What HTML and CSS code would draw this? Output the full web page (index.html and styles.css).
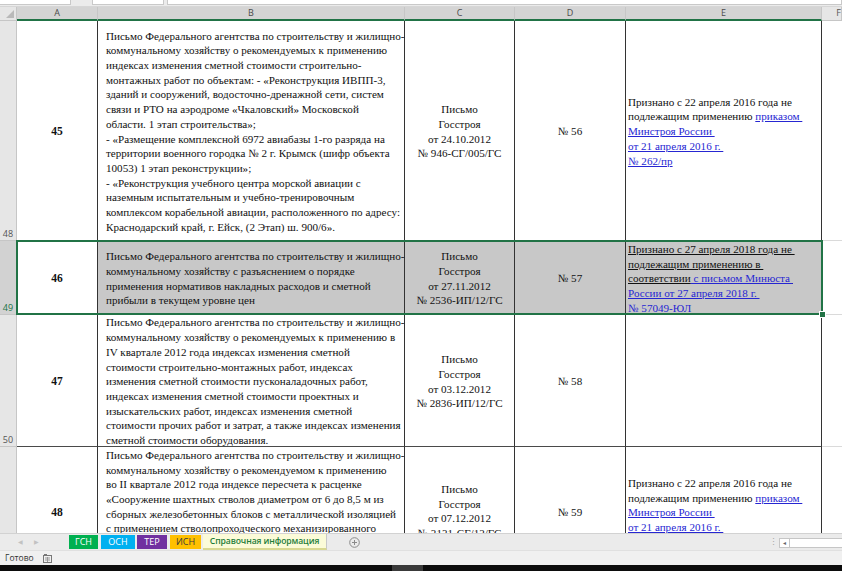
FILE: index.html
```html
<!DOCTYPE html>
<html lang="ru">
<head>
<meta charset="utf-8">
<title>Справочная информация</title>
<link rel="stylesheet" href="styles.css">
</head>
<body>
<div class="app">
  <div class="topstrip">
    <div class="box b1"></div>
    <div class="box b2"></div>
    <div class="box b3"></div>
  </div>

  <div class="sheet">
    <div class="corner"><span class="tri"></span></div>
    <div class="colhead sel">A</div>
    <div class="colhead sel">B</div>
    <div class="colhead sel">C</div>
    <div class="colhead sel">D</div>
    <div class="colhead sel">E</div>
    <div class="colhead f">F</div>

    <!-- row 48 -->
    <div class="rowhead">48</div>
    <div class="cell num">45</div>
    <div class="cell txt">
      <span class="line">Письмо Федерального агентства по строительству и жилищно-</span>
      <span class="line">коммунальному хозяйству о рекомендуемых к применению</span>
      <span class="line">индексах изменения сметной стоимости строительно-</span>
      <span class="line">монтажных работ по объектам: - «Реконструкция ИВПП-3,</span>
      <span class="line">зданий и сооружений, водосточно-дренажной сети, систем</span>
      <span class="line">связи и РТО на аэродроме «Чкаловский» Московской</span>
      <span class="line">области. 1 этап строительства»;</span>
      <span class="line">- «Размещение комплексной 6972 авиабазы 1-го разряда на</span>
      <span class="line">территории военного городка № 2 г. Крымск (шифр объекта</span>
      <span class="line">10053) 1 этап реконструкции»;</span>
      <span class="line">- «Реконструкция учебного центра морской авиации с</span>
      <span class="line">наземным испытательным и учебно-тренировочным</span>
      <span class="line">комплексом корабельной авиации, расположенного по адресу:</span>
      <span class="line">Краснодарский край, г. Ейск, (2 Этап) ш. 900/6».</span>
    </div>
    <div class="cell ctr">
      <span class="line">Письмо</span>
      <span class="line">Госстроя</span>
      <span class="line">от 24.10.2012</span>
      <span class="line">№ 946-СГ/005/ГС</span>
    </div>
    <div class="cell ctr"><span class="line">№ 56</span></div>
    <div class="cell note">
      <span class="line">Признано с 22 апреля 2016 года не</span>
      <span class="line">подлежащим применению <a class="link" href="#">приказом&nbsp;</a></span>
      <span class="line"><a class="link" href="#">Минстроя России&nbsp;</a></span>
      <span class="line"><a class="link" href="#">от 21 апреля 2016 г.&nbsp;</a></span>
      <span class="line"><a class="link" href="#">№ 262/пр</a></span>
    </div>
    <div class="fcell"></div>

    <!-- row 49 -->
    <div class="rowhead sel">49</div>
    <div class="cell num">46</div>
    <div class="cell txt sel">
      <span class="line">Письмо Федерального агентства по строительству и жилищно-</span>
      <span class="line">коммунальному хозяйству с разъяснением о порядке</span>
      <span class="line">применения нормативов накладных расходов и сметной</span>
      <span class="line">прибыли в текущем уровне цен</span>
    </div>
    <div class="cell ctr sel">
      <span class="line">Письмо</span>
      <span class="line">Госстроя</span>
      <span class="line">от 27.11.2012</span>
      <span class="line">№ 2536-ИП/12/ГС</span>
    </div>
    <div class="cell ctr sel"><span class="line">№ 57</span></div>
    <div class="cell note sel">
      <span class="line u">Признано с 27 апреля 2018 года не&nbsp;</span>
      <span class="line u">подлежащим применению в&nbsp;</span>
      <span class="line u">соответствии<a class="link" href="#"> с письмом Минюста&nbsp;</a></span>
      <span class="line"><a class="link" href="#">России от 27 апреля 2018 г.&nbsp;</a></span>
      <span class="line"><a class="link" href="#">№ 57049-ЮЛ</a></span>
    </div>
    <div class="fcell"></div>

    <!-- row 50 -->
    <div class="rowhead">50</div>
    <div class="cell num">47</div>
    <div class="cell txt">
      <span class="line">Письмо Федерального агентства по строительству и жилищно-</span>
      <span class="line">коммунальному хозяйству о рекомендуемых к применению в</span>
      <span class="line">IV квартале 2012 года индексах изменения сметной</span>
      <span class="line">стоимости строительно-монтажных работ, индексах</span>
      <span class="line">изменения сметной стоимости пусконаладочных работ,</span>
      <span class="line">индексах изменения сметной стоимости проектных и</span>
      <span class="line">изыскательских работ, индексах изменения сметной</span>
      <span class="line">стоимости прочих работ и затрат, а также индексах изменения</span>
      <span class="line">сметной стоимости оборудования.</span>
    </div>
    <div class="cell ctr">
      <span class="line">Письмо</span>
      <span class="line">Госстроя</span>
      <span class="line">от 03.12.2012</span>
      <span class="line">№ 2836-ИП/12/ГС</span>
    </div>
    <div class="cell ctr"><span class="line">№ 58</span></div>
    <div class="cell note"></div>
    <div class="fcell"></div>

    <!-- row 51 (cut by the sheet tab bar) -->
    <div class="rowhead last"></div>
    <div class="cell num last p-num">48</div>
    <div class="cell txt last p-txt">
      <span class="line">Письмо Федерального агентства по строительству и жилищно-</span>
      <span class="line">коммунальному хозяйству о рекомендуемом к применению</span>
      <span class="line">во II квартале 2012 года индексе пересчета к расценке</span>
      <span class="line">«Сооружение шахтных стволов диаметром от 6 до 8,5 м из</span>
      <span class="line">сборных железобетонных блоков с металлической изоляцией</span>
      <span class="line">с применением стволопроходческого механизированного</span>
    </div>
    <div class="cell ctr last p-ctr">
      <span class="line">Письмо</span>
      <span class="line">Госстроя</span>
      <span class="line">от 07.12.2012</span>
      <span class="line">№ 3131-СГ/12/ГС</span>
    </div>
    <div class="cell ctr last p-num">
      <span class="line">№ 59</span>
    </div>
    <div class="cell note last p-note">
      <span class="line">Признано с 22 апреля 2016 года не</span>
      <span class="line">подлежащим применению <a class="link" href="#">приказом&nbsp;</a></span>
      <span class="line"><a class="link" href="#">Минстроя России&nbsp;</a></span>
      <span class="line"><a class="link" href="#">от 21 апреля 2016 г.&nbsp;</a></span>
    </div>
    <div class="fcell last"></div>

    <div class="selection"><span class="handle"></span></div>
  </div>

  <div class="tabbar">
    <div class="nav"><span class="arrow">&#9664;</span><span class="arrow">&#9654;</span></div>
    <div class="tabs">
      <div class="tab t-gsn">ГСН</div>
      <div class="tab t-osn">ОСН</div>
      <div class="tab t-ter">ТЕР</div>
      <div class="tab t-isn">ИСН</div>
      <div class="tab active">Справочная информация</div>
    </div>
    <div class="addsheet">
      <svg width="11" height="11" viewBox="0 0 11 11"><circle cx="5.5" cy="5.5" r="4.8" fill="none" stroke="#8a8a8a" stroke-width="1"/><path d="M5.5 3v5M3 5.5h5" stroke="#8a8a8a" stroke-width="1"/></svg>
    </div>
    <div class="spacer"></div>
    <div class="splitter">&#8942;</div>
    <div class="hscroll"><span class="harrow">&#9666;</span></div>
  </div>

  <div class="status">
    <span class="ready">Готово</span>
    <span class="macro">
      <svg width="9" height="9" viewBox="0 0 9 9"><rect x="0.5" y="1.5" width="8" height="7" fill="none" stroke="#777"/><rect x="1" y="0" width="3" height="2" fill="#777"/><path d="M2 4h5M2 6h5M4.5 3v5" stroke="#999"/></svg>
    </span>
  </div>
  <div class="taskbar"><span class="tb-gap"></span></div>
</div>
</body>
</html>
```

FILE: styles.css
```css
* { box-sizing: border-box; }
html, body { margin: 0; padding: 0; }
body {
  width: 842px;
  height: 571px;
  overflow: hidden;
  background: #fff;
  font-family: "Liberation Serif", "Times New Roman", serif;
}
.app {
  display: flex;
  flex-direction: column;
  width: 842px;
  height: 571px;
}

/* formula bar remnant */
.topstrip {
  height: 7px;
  flex: none;
  display: flex;
  background: #ebebeb;
  border-bottom: 1px solid #d6d6d6;
}
.topstrip .box {
  height: 5px;
  background: #fff;
  border-bottom: 1px solid #c9c9c9;
  border-right: 1px solid #c9c9c9;
}
.b1 { width: 71px; }
.b2 { width: 72px; margin-left: 21px; border-left: 1px solid #c9c9c9; }
.b3 { flex: 1; margin-left: 3px; border-left: 1px solid #c9c9c9; }

/* sheet grid */
.sheet {
  position: relative;
  flex: none;
  height: 526px;
  overflow: hidden;
  display: grid;
  grid-template-columns: 17px 81px 307px 110px 111px 196px 1fr;
  grid-template-rows: 14px 220px 74px 132px 86px;
  background: #fff;
}
.corner {
  background: #e6e6e6;
  border-right: 1px solid #c6c6c6;
  border-bottom: 1px solid #c6c6c6;
  display: flex;
  align-items: flex-end;
  justify-content: flex-end;
  padding: 0 2px 2px 0;
}
.tri {
  width: 0;
  height: 0;
  border-left: 8px solid transparent;
  border-bottom: 8px solid #b9b9b9;
}
.colhead {
  background: #e6e6e6;
  border-right: 1px solid #c6c6c6;
  border-bottom: 1px solid #c6c6c6;
  font-family: "Open Sans", "Liberation Sans", sans-serif;
  font-size: 9px;
  color: #555;
  text-align: center;
  line-height: 12px;
}
.colhead.sel {
  background: #d4d4d4;
  border-bottom: 2px solid #217346;
  color: #4b4b4b;
}
.colhead.f {
  text-align: right;
  overflow: hidden;
}
.rowhead {
  background: #e6e6e6;
  border-right: 1px solid #c6c6c6;
  border-bottom: 1px solid #c6c6c6;
  display: flex;
  align-items: flex-end;
  justify-content: center;
  font-family: "Open Sans", "Liberation Sans", sans-serif;
  font-size: 9px;
  line-height: 11px;
  color: #555;
  padding-bottom: 1px;
}
.rowhead.sel {
  background: #d2d2d2;
  color: #217346;
}

.cell {
  border-right: 1px solid #333;
  border-bottom: 1px solid #4a4a4a;
  display: flex;
  flex-direction: column;
  justify-content: center;
  font-size: 11.1px;
  line-height: 14.67px;
  color: #111;
  min-width: 0;
  padding-top: 2px;
}
.cell.num {
  align-items: center;
  font-weight: bold;
  font-size: 11.5px;
}
.cell.txt {
  align-items: flex-start;
  padding-left: 8px;
}
.cell.ctr {
  align-items: center;
  text-align: center;
}
.cell.note {
  align-items: flex-start;
  padding-left: 2px;
}
.cell.sel { background: #c8c8c8; }
.fcell {
  border-bottom: 1px solid #dadada;
}

/* last visible row, cut by the tab bar */
.last {
  border-bottom: none;
  overflow: hidden;
}
.cell.last { justify-content: flex-start; }
.cell.p-txt { padding-top: 1px; }
.cell.p-ctr { padding-top: 35px; }
.cell.p-num { padding-top: 58px; }
.cell.p-note { padding-top: 29px; }

.line {
  display: block;
  white-space: nowrap;
}
.u { text-decoration: underline; }
.link {
  color: #2626d2;
  text-decoration: underline;
}

.selection {
  position: absolute;
  left: 16px;
  top: 233px;
  width: 807px;
  height: 75px;
  border: 2px solid #217346;
  pointer-events: none;
}
.handle {
  position: absolute;
  right: -5px;
  bottom: -5px;
  width: 7px;
  height: 7px;
  background: #217346;
  border: 1px solid #fff;
}

/* sheet tabs */
.tabbar {
  flex: none;
  height: 17px;
  display: flex;
  align-items: flex-start;
  background: #ebebeb;
  border-top: 1px solid #d2d2d2;
  font-family: "Open Sans", "Liberation Sans", sans-serif;
}
.nav {
  width: 69px;
  display: flex;
  gap: 11px;
  padding: 3px 0 0 18px;
  font-size: 6px;
  color: #c2c2c2;
  line-height: 10px;
}
.tabs {
  display: flex;
  gap: 2px;
  height: 16px;
}
.tab {
  height: 14px;
  margin-top: 1px;
  display: flex;
  align-items: center;
  justify-content: center;
  font-size: 9px;
  color: #fff;
  line-height: 12px;
  white-space: nowrap;
}
.t-gsn { width: 29px; background: #00b050; margin-right: 1px; }
.t-osn { width: 34px; background: #00b0f0; }
.t-ter { width: 30px; background: #7030a0; margin-right: 1px; }
.t-isn { width: 31px; background: #ffc000; color: #3a3a3a; }
.tab.active {
  width: 124px;
  height: 16px;
  margin-top: 0;
  background: #fbfbd8;
  color: #1e7d3a;
  font-weight: 600;
  font-size: 8.6px;
  letter-spacing: -0.1px;
  border-bottom: 2px solid #d8d890;
  border-right: 1px solid #c8c8c8;
}
.addsheet {
  width: 11px;
  height: 11px;
  margin: 3px 0 0 22px;
  display: flex;
}
.spacer { flex: 1; }
.splitter {
  width: 11px;
  font-size: 9px;
  line-height: 16px;
  color: #a8a8a8;
  text-align: center;
}
.hscroll {
  width: 63px;
  height: 10px;
  margin-top: 4px;
  background: #fff;
  border: 1px solid #c6c6c6;
  border-right: none;
  display: flex;
  align-items: center;
}
.harrow {
  width: 10px;
  height: 8px;
  border-right: 1px solid #c6c6c6;
  font-size: 6px;
  line-height: 8px;
  color: #666;
  text-align: center;
}

/* status bar */
.status {
  flex: none;
  height: 15px;
  display: flex;
  align-items: center;
  background: #f0f0f0;
  border-top: 1px solid #e0e0e0;
  font-family: "Open Sans", "Liberation Sans", sans-serif;
  font-size: 8.5px;
  line-height: 12px;
  color: #333;
  padding-left: 5px;
}
.ready { width: 38px; }
.macro { display: flex; }
.taskbar {
  flex: 1;
  background: #0c0c0c;
  display: flex;
}
.tb-gap {
  width: 31px;
  margin-left: 392px;
  background: #3a3a3a;
}
```
